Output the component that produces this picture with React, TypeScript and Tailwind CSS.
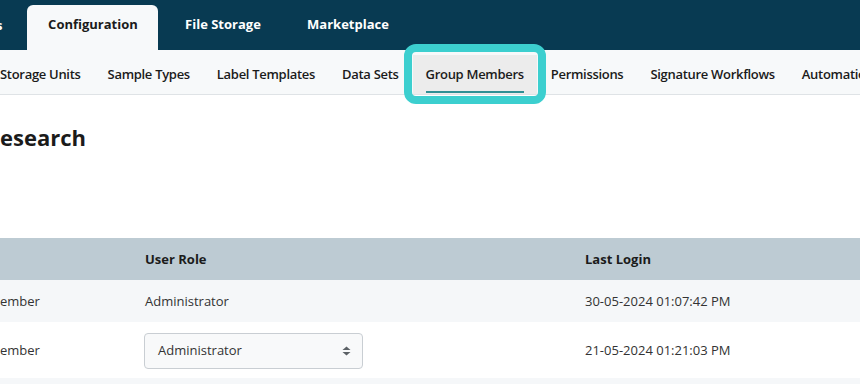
const topTabs = [
  { label: 'Configuration', width: 'w-[131px]', active: true },
  { label: 'File Storage', width: 'w-[129px]', active: false },
  { label: 'Marketplace', width: 'w-[121px]', active: false },
]

const subTabs = [
  'Storage Units',
  'Sample Types',
  'Label Templates',
  'Data Sets',
  'Group Members',
  'Permissions',
  'Signature Workflows',
  'Automations',
]

const rows = [
  { name: 'ember', role: 'Administrator', login: '30-05-2024 01:07:42 PM', editable: false },
  { name: 'ember', role: 'Administrator', login: '21-05-2024 01:21:03 PM', editable: true },
]

function SortArrows() {
  return (
    <svg width="9" height="10" viewBox="0 0 9 10" className="text-[#5c6166]">
      <path d="M4.5 0.5 L8.5 4 L0.5 4 Z" fill="currentColor" />
      <path d="M4.5 9.5 L8.5 6 L0.5 6 Z" fill="currentColor" />
    </svg>
  )
}

export default function App() {
  return (
    <div className="h-[384px] w-[860px] overflow-hidden bg-white font-['Open_Sans',sans-serif] text-[13px] text-[#212529]">
      {/* top nav */}
      <div className="flex h-[50px] items-end bg-[#083a52]">
        <span className="-ml-[4px] self-center pt-[1px] text-[13px] font-bold text-white">s</span>
        <div className="ml-[25px] flex items-end">
          {topTabs.map((t) => (
            <div
              key={t.label}
              className={`flex h-[45px] items-center justify-center ${t.width} ${
                t.active ? 'rounded-t-[6px] bg-[#f7f9fa] text-[#1b1b1b]' : 'text-white'
              } pb-[5px] font-bold`}
            >
              {t.label}
            </div>
          ))}
        </div>
      </div>

      {/* sub nav */}
      <div className="flex h-[45px] items-stretch gap-[27px] whitespace-nowrap border-b border-[#dfe3e6] bg-[#f7f9fa] font-semibold tracking-[-0.3px] text-[#1b1b1b]">
        {subTabs.map((s) =>
          s === 'Group Members' ? (
            <div key={s} className="relative -mx-[13px] mt-[5px] flex items-center bg-[#ececec] px-[13px] pt-[1px]">
              {s}
              <span className="absolute bottom-[1px] left-[13px] right-[13px] h-[2px] bg-[#2f8f94]" />
              <span className="pointer-events-none absolute -bottom-[10px] -left-[9px] -right-[9px] -top-[11px] rounded-[12px] border-[8px] border-[#3ccfcf]" />
            </div>
          ) : (
            <div key={s} className="flex items-center pt-[6px]">
              {s}
            </div>
          ),
        )}
      </div>

      {/* title */}
      <div className="pt-[27px]">
        <h1 className="text-[22px] font-bold leading-[30px] text-[#1b1b1b]">esearch</h1>
      </div>

      {/* table */}
      <div className="mt-[86px]">
        <div className="grid h-[42px] grid-cols-[145px_440px_1fr] items-center bg-[#bdcbd3] pt-[1px] font-bold text-[#1b1b1b]">
          <div />
          <div>User Role</div>
          <div>Last Login</div>
        </div>
        {rows.map((r, i) => (
          <div
            key={i}
            className={`grid grid-cols-[145px_440px_1fr] items-center pt-[1px] text-[#333] ${
              r.editable ? 'h-[56px] bg-white pt-[2px]' : 'h-[42px] bg-[#f5f7f9]'
            }`}
          >
            <div>{r.name}</div>
            <div>
              {r.editable ? (
                <div className="-ml-[1px] flex h-[36px] w-[219px] items-center justify-between rounded-[4px] border border-[#c9ced3] bg-[#f8f9fa] pl-[13px] pr-[11px]">
                  <span>{r.role}</span>
                  <SortArrows />
                </div>
              ) : (
                r.role
              )}
            </div>
            <div>{r.login}</div>
          </div>
        ))}
        <div className="h-[20px] bg-[#f5f7f9]" />
      </div>
    </div>
  )
}
